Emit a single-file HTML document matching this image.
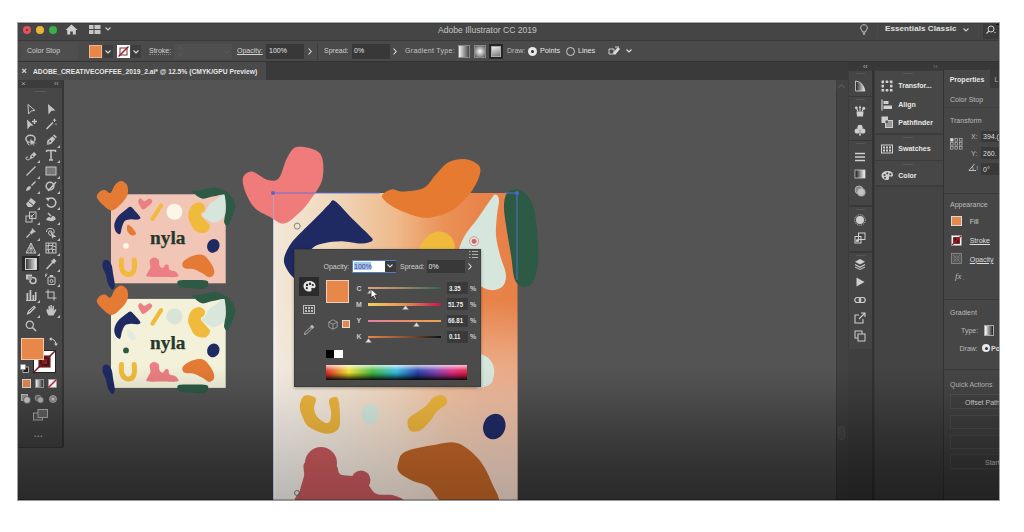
<!DOCTYPE html>
<html><head><meta charset="utf-8">
<style>
*{margin:0;padding:0;box-sizing:border-box}
html,body{width:1024px;height:532px;overflow:hidden;background:#fff}
body{position:relative;font-family:"Liberation Sans",sans-serif;color:#d4d4d4}
.a{position:absolute}
.t{position:absolute;white-space:nowrap;line-height:1;font-size:7px}
.b{font-weight:bold}
svg{position:absolute;overflow:visible}
#app{position:absolute;left:18px;top:22px;width:981px;height:478px;background:#3d3d3d;overflow:hidden}
</style></head><body>
<div id="app">
  <!-- title bar -->
  <div class="a" style="left:0;top:0;width:981px;height:18px;background:#454545"></div>
  <div class="a" style="left:0;top:17.5px;width:981px;height:1.5px;background:#3a3a3a"></div>
  <!-- control bar -->
  <div class="a" style="left:0;top:19px;width:981px;height:21px;background:#4a4a4a"></div>
  <div class="a" style="left:0;top:39px;width:981px;height:1px;background:#333"></div>
  <!-- tab bar -->
  <div class="a" style="left:0;top:40px;width:981px;height:18px;background:#3a3a3a"></div>
  <div class="a" style="left:0;top:40px;width:248px;height:18px;background:#4a4a4a"></div>
  <!-- toolbar -->
  <div class="a" style="left:0;top:58px;width:45px;height:367px;background:#474747"></div>
  <div class="a" style="left:0;top:425px;width:45px;height:53px;background:#545454"></div>
  <!-- canvas -->
  <div class="a" style="left:45px;top:58px;width:773px;height:420px;background:#545454"></div>
  <!-- scrollbar -->
  <div class="a" style="left:818px;top:58px;width:12px;height:420px;background:#3f3f3f"></div>
  <!-- icon strip -->
  <div class="a" style="left:830px;top:58px;width:24px;height:420px;background:#444"></div>
  <!-- panels column -->
  <div class="a" style="left:854px;top:58px;width:71px;height:420px;background:#434343"></div>
  <!-- properties -->
  <div class="a" style="left:925px;top:58px;width:56px;height:420px;background:#454545"></div>
</div>
<!--ART-->
<svg style="left:0;top:0" width="1024" height="532" viewBox="0 0 1024 532">
<defs><clipPath id="cv"><rect x="63" y="80" width="773" height="420"/></clipPath>
<linearGradient id="abh" x1="273" y1="0" x2="517" y2="0" gradientUnits="userSpaceOnUse"><stop offset="0" stop-color="#f2e8d8"/><stop offset="0.25" stop-color="#f0d8bc"/><stop offset="0.5" stop-color="#efba8c"/><stop offset="0.7" stop-color="#ea9256"/><stop offset="0.85" stop-color="#e8844a"/><stop offset="1" stop-color="#e88048"/></linearGradient>
<linearGradient id="abv" x1="0" y1="193" x2="0" y2="500" gradientUnits="userSpaceOnUse"><stop offset="0" stop-color="#f0ece8" stop-opacity="0"/><stop offset="0.35" stop-color="#f0ece8" stop-opacity="0"/><stop offset="0.51" stop-color="#f0ece8" stop-opacity="0.3"/><stop offset="0.67" stop-color="#eeecea" stop-opacity="0.52"/><stop offset="0.9" stop-color="#eceae9" stop-opacity="0.72"/><stop offset="1" stop-color="#eceae9" stop-opacity="0.78"/></linearGradient>
</defs>
<g clip-path="url(#cv)">
<g transform="translate(0,0)">
<rect x="111" y="194.3" width="114.7" height="89" fill="#f2c6b6"/>
<path d="M192.2 191.0 C193.0 190.3 196.8 190.8 200.3 190.2 C203.9 189.6 209.8 187.6 213.5 187.5 C217.2 187.4 220.7 188.8 222.6 189.8 C224.5 190.8 225.9 192.6 225.2 193.5 C224.5 194.4 221.0 194.6 218.6 195.2 C216.2 195.8 213.0 196.4 210.5 197.0 C208.0 197.6 205.4 198.8 203.4 198.8 C201.4 198.8 199.7 197.6 198.3 196.8 C196.9 196.0 196.2 195.2 195.2 194.2 C194.2 193.2 191.3 191.7 192.2 191.0Z" fill="#2c5a45" />
<path d="M224.7 191.1 C225.8 190.2 230.0 194.8 231.8 197.2 C233.6 199.6 235.1 202.3 235.3 205.4 C235.5 208.5 234.1 212.1 232.8 215.5 C231.5 218.9 229.1 224.5 227.7 225.7 C226.3 226.9 224.7 224.1 224.2 222.6 C223.7 221.1 224.5 219.9 224.7 216.5 C224.9 213.1 225.2 206.5 225.2 202.3 C225.2 198.1 223.6 191.9 224.7 191.1Z" fill="#2c5a45" />
<path d="M221.6 195.2 C223.0 194.8 224.4 193.7 225.0 197.0 C225.6 200.3 226.8 210.7 225.0 215.0 C223.2 219.3 217.4 221.8 214.5 222.6 C211.6 223.4 209.5 220.8 207.4 219.6 C205.3 218.4 202.1 216.9 201.8 215.5 C201.5 214.1 204.1 213.3 205.4 211.4 C206.7 209.5 207.6 206.3 209.4 204.3 C211.2 202.3 214.5 200.8 216.5 199.3 C218.5 197.8 220.2 195.6 221.6 195.2Z" fill="#d6e6dc" />
<path d="M198.3 202.3 C200.5 202.1 203.4 204.1 204.4 205.4 C205.4 206.8 205.0 208.9 204.4 210.4 C203.8 211.9 200.5 212.6 200.8 214.5 C201.1 216.4 204.9 219.6 206.4 221.6 C207.9 223.6 210.2 224.8 210.0 226.7 C209.8 228.6 207.9 232.1 205.4 232.8 C202.9 233.5 197.7 232.4 195.2 230.7 C192.7 229.0 191.4 225.1 190.2 222.6 C189.0 220.1 187.9 218.2 188.1 215.5 C188.3 212.8 189.5 208.6 191.2 206.4 C192.9 204.2 196.1 202.5 198.3 202.3Z" fill="#f0bb3c" />
<circle cx="174.5" cy="211.8" r="8" fill="#fbf6e6"/>
<path d="M140.5 198.3 C141.5 198.3 143.0 201.1 144.5 201.2 C146.0 201.2 148.2 198.5 149.5 198.6 C150.8 198.7 152.4 200.3 152.3 201.5 C152.2 202.7 150.6 204.2 149.0 205.5 C147.4 206.8 144.6 209.6 143.0 209.5 C141.4 209.4 140.3 206.4 139.5 205.0 C138.7 203.6 138.1 202.1 138.3 201.0 C138.5 199.9 139.5 198.3 140.5 198.3Z" fill="#ec7f83" />
<path d="M161 205.5 L152.5 219" stroke="#f0bb3c" stroke-width="4.2" stroke-linecap="round"/>
<path d="M100.0 191.4 C98.6 192.6 96.3 194.7 96.8 197.0 C97.3 199.3 100.5 202.8 103.0 205.0 C105.5 207.2 108.7 210.7 111.7 210.5 C114.7 210.3 118.4 206.6 121.0 204.0 C123.6 201.4 126.5 197.9 127.5 194.7 C128.5 191.5 128.1 187.3 127.0 185.0 C125.9 182.7 123.0 180.9 121.0 180.9 C119.0 180.9 116.8 183.0 115.0 185.0 C113.2 187.0 112.1 192.2 110.4 193.0 C108.7 193.8 106.7 190.3 105.0 190.0 C103.3 189.7 101.4 190.2 100.0 191.4Z" fill="#e57a35" />
<path d="M130.5 206.8 C132.0 207.1 133.3 209.2 135.0 211.0 C136.7 212.8 140.2 216.4 140.5 217.8 C140.8 219.2 138.6 219.4 137.0 219.6 C135.4 219.8 133.0 219.0 131.0 219.2 C129.0 219.4 126.5 219.5 125.0 220.8 C123.5 222.1 122.8 224.8 122.0 227.0 C121.2 229.2 121.1 233.5 120.0 234.2 C118.9 234.9 116.4 232.7 115.5 231.0 C114.6 229.3 114.0 226.4 114.4 224.0 C114.8 221.6 116.1 218.9 118.0 216.5 C119.9 214.1 123.9 211.1 126.0 209.5 C128.1 207.9 129.0 206.6 130.5 206.8Z" fill="#1f2a63" />
<path d="M127.5 225.0 C128.2 224.3 130.6 226.1 132.0 227.5 C133.4 228.9 136.0 232.2 136.0 233.5 C136.0 234.8 133.4 235.8 132.0 235.5 C130.6 235.2 128.2 233.2 127.5 231.5 C126.8 229.8 126.8 225.7 127.5 225.0Z" fill="#e57a35" />
<circle cx="126" cy="245.8" r="2.9" fill="#fbf6e6"/>
<ellipse cx="213.3" cy="245.8" rx="6.1" ry="7" transform="rotate(25 213.3 245.8)" fill="#1f2a63"/>
<text x="150" y="244.4" font-family="Liberation Serif" font-weight="bold" font-size="19" fill="#26382c" stroke="#26382c" stroke-width="0.25" textLength="35.5" lengthAdjust="spacingAndGlyphs">nyla</text>
<path d="M121.5 260 Q120 273 128 274.5 Q136 275 134.2 260" stroke="#f0bb3c" stroke-width="5" fill="none" stroke-linecap="round"/>
<path d="M103.7 260.7 C104.6 259.7 106.5 259.6 107.8 260.3 C109.1 261.0 110.6 262.4 111.5 264.8 C112.4 267.2 112.7 271.2 113.2 274.6 C113.8 278.0 114.9 282.8 114.8 285.3 C114.7 287.8 113.5 289.5 112.4 289.4 C111.3 289.3 109.4 287.0 108.3 284.5 C107.2 282.0 106.8 277.6 105.8 274.6 C104.8 271.6 102.8 268.7 102.5 266.4 C102.2 264.1 102.8 261.7 103.7 260.7Z" fill="#1f2a63" />
<path d="M148.0 272.1 C148.6 270.5 150.2 269.1 150.5 267.2 C150.8 265.3 149.1 262.3 149.7 260.7 C150.2 259.1 152.3 257.5 153.8 257.4 C155.3 257.2 157.8 258.4 158.7 259.8 C159.6 261.2 158.8 264.2 159.5 265.6 C160.2 267.0 161.8 268.1 162.8 268.0 C163.8 267.9 164.4 265.3 165.3 264.8 C166.2 264.3 167.8 264.4 168.5 265.2 C169.2 266.0 168.3 268.7 169.4 269.7 C170.5 270.7 173.7 270.5 175.1 271.3 C176.5 272.1 177.7 273.7 178.0 274.6 C178.3 275.5 179.5 276.5 176.8 276.9 C174.1 277.3 166.9 277.1 162.0 277.0 C157.1 276.9 149.5 277.4 147.2 276.6 C144.9 275.8 147.4 273.7 148.0 272.1Z" fill="#ec7f83" />
<path d="M183.0 262.0 C184.3 260.0 189.0 257.2 192.0 256.0 C195.0 254.8 198.5 254.2 201.0 254.5 C203.5 254.8 205.0 255.9 207.0 258.0 C209.0 260.1 211.8 264.3 213.0 267.0 C214.2 269.7 214.7 272.3 214.0 274.0 C213.3 275.7 211.0 277.5 209.0 277.3 C207.0 277.1 204.7 274.4 202.0 273.0 C199.3 271.6 196.0 269.8 193.0 269.0 C190.0 268.2 185.7 269.2 184.0 268.0 C182.3 266.8 181.7 264.0 183.0 262.0Z" fill="#e57a35" />
<path d="M178.0 281.0 C179.7 279.8 185.3 280.1 190.0 280.0 C194.7 279.9 203.0 279.8 206.0 280.5 C209.0 281.2 208.3 282.6 208.0 284.0 C207.7 285.4 207.0 288.1 204.0 288.8 C201.0 289.5 194.0 288.3 190.0 288.0 C186.0 287.7 182.0 288.2 180.0 287.0 C178.0 285.8 176.3 282.2 178.0 281.0Z" fill="#2c5a45" />
</g>
<g transform="translate(0,104.6)">
<rect x="111" y="194.3" width="114.7" height="89" fill="#f3f1da"/>
<path d="M192.2 191.0 C193.0 190.3 196.8 190.8 200.3 190.2 C203.9 189.6 209.8 187.6 213.5 187.5 C217.2 187.4 220.7 188.8 222.6 189.8 C224.5 190.8 225.9 192.6 225.2 193.5 C224.5 194.4 221.0 194.6 218.6 195.2 C216.2 195.8 213.0 196.4 210.5 197.0 C208.0 197.6 205.4 198.8 203.4 198.8 C201.4 198.8 199.7 197.6 198.3 196.8 C196.9 196.0 196.2 195.2 195.2 194.2 C194.2 193.2 191.3 191.7 192.2 191.0Z" fill="#2c5a45" />
<path d="M224.7 191.1 C225.8 190.2 230.0 194.8 231.8 197.2 C233.6 199.6 235.1 202.3 235.3 205.4 C235.5 208.5 234.1 212.1 232.8 215.5 C231.5 218.9 229.1 224.5 227.7 225.7 C226.3 226.9 224.7 224.1 224.2 222.6 C223.7 221.1 224.5 219.9 224.7 216.5 C224.9 213.1 225.2 206.5 225.2 202.3 C225.2 198.1 223.6 191.9 224.7 191.1Z" fill="#2c5a45" />
<path d="M221.6 195.2 C223.0 194.8 224.4 193.7 225.0 197.0 C225.6 200.3 226.8 210.7 225.0 215.0 C223.2 219.3 217.4 221.8 214.5 222.6 C211.6 223.4 209.5 220.8 207.4 219.6 C205.3 218.4 202.1 216.9 201.8 215.5 C201.5 214.1 204.1 213.3 205.4 211.4 C206.7 209.5 207.6 206.3 209.4 204.3 C211.2 202.3 214.5 200.8 216.5 199.3 C218.5 197.8 220.2 195.6 221.6 195.2Z" fill="#d9e6dc" />
<path d="M198.3 202.3 C200.5 202.1 203.4 204.1 204.4 205.4 C205.4 206.8 205.0 208.9 204.4 210.4 C203.8 211.9 200.5 212.6 200.8 214.5 C201.1 216.4 204.9 219.6 206.4 221.6 C207.9 223.6 210.2 224.8 210.0 226.7 C209.8 228.6 207.9 232.1 205.4 232.8 C202.9 233.5 197.7 232.4 195.2 230.7 C192.7 229.0 191.4 225.1 190.2 222.6 C189.0 220.1 187.9 218.2 188.1 215.5 C188.3 212.8 189.5 208.6 191.2 206.4 C192.9 204.2 196.1 202.5 198.3 202.3Z" fill="#f0bb3c" />
<circle cx="174.5" cy="211.8" r="8" fill="#d8e4d6"/>
<path d="M140.5 198.3 C141.5 198.3 143.0 201.1 144.5 201.2 C146.0 201.2 148.2 198.5 149.5 198.6 C150.8 198.7 152.4 200.3 152.3 201.5 C152.2 202.7 150.6 204.2 149.0 205.5 C147.4 206.8 144.6 209.6 143.0 209.5 C141.4 209.4 140.3 206.4 139.5 205.0 C138.7 203.6 138.1 202.1 138.3 201.0 C138.5 199.9 139.5 198.3 140.5 198.3Z" fill="#ec7f83" />
<path d="M161 205.5 L152.5 219" stroke="#f0bb3c" stroke-width="4.2" stroke-linecap="round"/>
<path d="M100.0 191.4 C98.6 192.6 96.3 194.7 96.8 197.0 C97.3 199.3 100.5 202.8 103.0 205.0 C105.5 207.2 108.7 210.7 111.7 210.5 C114.7 210.3 118.4 206.6 121.0 204.0 C123.6 201.4 126.5 197.9 127.5 194.7 C128.5 191.5 128.1 187.3 127.0 185.0 C125.9 182.7 123.0 180.9 121.0 180.9 C119.0 180.9 116.8 183.0 115.0 185.0 C113.2 187.0 112.1 192.2 110.4 193.0 C108.7 193.8 106.7 190.3 105.0 190.0 C103.3 189.7 101.4 190.2 100.0 191.4Z" fill="#e57a35" />
<path d="M130.5 206.8 C132.0 207.1 133.3 209.2 135.0 211.0 C136.7 212.8 140.2 216.4 140.5 217.8 C140.8 219.2 138.6 219.4 137.0 219.6 C135.4 219.8 133.0 219.0 131.0 219.2 C129.0 219.4 126.5 219.5 125.0 220.8 C123.5 222.1 122.8 224.8 122.0 227.0 C121.2 229.2 121.1 233.5 120.0 234.2 C118.9 234.9 116.4 232.7 115.5 231.0 C114.6 229.3 114.0 226.4 114.4 224.0 C114.8 221.6 116.1 218.9 118.0 216.5 C119.9 214.1 123.9 211.1 126.0 209.5 C128.1 207.9 129.0 206.6 130.5 206.8Z" fill="#1f2a63" />
<path d="M127.5 225.0 C128.2 224.3 130.6 226.1 132.0 227.5 C133.4 228.9 136.0 232.2 136.0 233.5 C136.0 234.8 133.4 235.8 132.0 235.5 C130.6 235.2 128.2 233.2 127.5 231.5 C126.8 229.8 126.8 225.7 127.5 225.0Z" fill="#e2ebdf" />
<circle cx="126" cy="245.8" r="2.9" fill="#2c5a45"/>
<ellipse cx="213.3" cy="245.8" rx="6.1" ry="7" transform="rotate(25 213.3 245.8)" fill="#1f2a63"/>
<text x="150" y="244.4" font-family="Liberation Serif" font-weight="bold" font-size="19" fill="#26382c" stroke="#26382c" stroke-width="0.25" textLength="35.5" lengthAdjust="spacingAndGlyphs">nyla</text>
<path d="M121.5 260 Q120 273 128 274.5 Q136 275 134.2 260" stroke="#f0bb3c" stroke-width="5" fill="none" stroke-linecap="round"/>
<path d="M103.7 260.7 C104.6 259.7 106.5 259.6 107.8 260.3 C109.1 261.0 110.6 262.4 111.5 264.8 C112.4 267.2 112.7 271.2 113.2 274.6 C113.8 278.0 114.9 282.8 114.8 285.3 C114.7 287.8 113.5 289.5 112.4 289.4 C111.3 289.3 109.4 287.0 108.3 284.5 C107.2 282.0 106.8 277.6 105.8 274.6 C104.8 271.6 102.8 268.7 102.5 266.4 C102.2 264.1 102.8 261.7 103.7 260.7Z" fill="#1f2a63" />
<path d="M148.0 272.1 C148.6 270.5 150.2 269.1 150.5 267.2 C150.8 265.3 149.1 262.3 149.7 260.7 C150.2 259.1 152.3 257.5 153.8 257.4 C155.3 257.2 157.8 258.4 158.7 259.8 C159.6 261.2 158.8 264.2 159.5 265.6 C160.2 267.0 161.8 268.1 162.8 268.0 C163.8 267.9 164.4 265.3 165.3 264.8 C166.2 264.3 167.8 264.4 168.5 265.2 C169.2 266.0 168.3 268.7 169.4 269.7 C170.5 270.7 173.7 270.5 175.1 271.3 C176.5 272.1 177.7 273.7 178.0 274.6 C178.3 275.5 179.5 276.5 176.8 276.9 C174.1 277.3 166.9 277.1 162.0 277.0 C157.1 276.9 149.5 277.4 147.2 276.6 C144.9 275.8 147.4 273.7 148.0 272.1Z" fill="#ec7f83" />
<path d="M183.0 262.0 C184.3 260.0 189.0 257.2 192.0 256.0 C195.0 254.8 198.5 254.2 201.0 254.5 C203.5 254.8 205.0 255.9 207.0 258.0 C209.0 260.1 211.8 264.3 213.0 267.0 C214.2 269.7 214.7 272.3 214.0 274.0 C213.3 275.7 211.0 277.5 209.0 277.3 C207.0 277.1 204.7 274.4 202.0 273.0 C199.3 271.6 196.0 269.8 193.0 269.0 C190.0 268.2 185.7 269.2 184.0 268.0 C182.3 266.8 181.7 264.0 183.0 262.0Z" fill="#e57a35" />
<path d="M178.0 281.0 C179.7 279.8 185.3 280.1 190.0 280.0 C194.7 279.9 203.0 279.8 206.0 280.5 C209.0 281.2 208.3 282.6 208.0 284.0 C207.7 285.4 207.0 288.1 204.0 288.8 C201.0 289.5 194.0 288.3 190.0 288.0 C186.0 287.7 182.0 288.2 180.0 287.0 C178.0 285.8 176.3 282.2 178.0 281.0Z" fill="#2c5a45" />
</g>
<rect x="273" y="193" width="244.5" height="320" fill="url(#abh)"/>
<rect x="273" y="193" width="244.5" height="320" fill="url(#abv)"/>
<path d="M251.4 171.6 C247.2 171.8 242.4 175.3 242.6 181.0 C242.8 186.7 248.0 199.5 252.6 205.5 C257.2 211.5 264.8 214.0 270.0 217.0 C275.2 220.0 279.2 224.2 284.0 223.5 C288.8 222.8 294.5 217.1 299.0 213.0 C303.5 208.9 307.1 204.8 311.0 199.0 C314.9 193.2 321.0 186.0 322.5 178.4 C324.0 170.8 324.1 158.8 320.0 153.5 C315.9 148.2 303.2 146.1 297.7 146.8 C292.2 147.6 290.1 152.8 287.0 158.0 C283.9 163.2 282.2 174.3 279.0 178.0 C275.8 181.7 272.6 181.1 268.0 180.0 C263.4 178.9 255.6 171.4 251.4 171.6Z" fill="#ef7b7b" />
<path d="M335.2 201.2 C339.2 203.8 347.8 214.3 353.3 219.8 C358.8 225.3 364.8 230.6 368.0 234.0 C371.2 237.4 373.6 238.9 372.5 240.5 C371.4 242.1 366.3 243.4 361.2 243.5 C356.1 243.6 348.0 241.3 342.0 241.2 C336.0 241.1 329.8 241.9 325.1 242.9 C320.4 243.9 316.8 244.7 313.8 246.9 C310.8 249.1 309.3 251.8 307.0 256.0 C304.7 260.2 302.2 268.3 300.0 272.0 C297.8 275.7 296.7 279.7 294.0 278.0 C291.3 276.3 284.7 267.5 284.0 262.0 C283.3 256.5 286.9 250.2 290.0 245.0 C293.1 239.8 297.6 236.1 302.5 231.0 C307.4 225.9 315.1 218.6 319.5 214.2 C323.9 209.8 326.4 206.7 329.0 204.5 C331.6 202.3 331.1 198.6 335.2 201.2Z" fill="#1f2a63" />
<path d="M382.0 196.5 C381.8 193.7 387.8 190.3 391.2 189.5 C394.6 188.7 397.0 191.8 402.4 191.6 C407.8 191.3 418.0 190.9 423.6 188.0 C429.2 185.1 432.1 178.3 436.3 174.0 C440.5 169.7 444.1 164.5 449.0 162.0 C453.9 159.5 460.8 158.5 465.9 159.2 C470.9 159.9 477.2 162.8 479.3 166.0 C481.4 169.2 480.4 173.3 478.6 178.2 C476.8 183.0 473.2 189.7 468.7 195.1 C464.2 200.5 458.4 206.8 451.8 210.6 C445.2 214.4 435.8 217.0 429.2 217.7 C422.6 218.4 418.4 216.8 412.3 214.9 C406.2 213.0 397.7 209.5 392.6 206.4 C387.6 203.3 382.2 199.3 382.0 196.5Z" fill="#e57a30" />
<path d="M420.0 250.0 C418.0 246.3 424.7 239.1 428.0 236.0 C431.3 232.9 436.0 231.3 440.0 231.6 C444.0 231.9 449.7 234.6 452.0 238.0 C454.3 241.4 456.0 248.7 454.0 252.0 C452.0 255.3 445.7 258.3 440.0 258.0 C434.3 257.7 422.0 253.7 420.0 250.0Z" fill="#f0bb3c" />
<path d="M495.2 194.5 C496.9 194.2 498.7 196.6 499.0 200.0 C499.3 203.4 497.5 209.2 497.0 215.0 C496.5 220.8 495.5 228.3 496.0 235.0 C496.5 241.7 498.3 248.3 500.0 255.0 C501.7 261.7 505.7 269.7 506.0 275.0 C506.3 280.3 504.7 284.5 502.0 287.0 C499.3 289.5 494.0 290.5 490.0 290.0 C486.0 289.5 482.0 287.3 478.0 284.0 C474.0 280.7 469.3 274.8 466.0 270.0 C462.7 265.2 458.7 260.5 458.4 255.0 C458.1 249.5 460.7 243.2 464.0 237.0 C467.3 230.8 473.8 223.8 478.0 218.0 C482.2 212.2 486.1 205.9 489.0 202.0 C491.9 198.1 493.5 194.8 495.2 194.5Z" fill="#d6e6dc" />
<path d="M476.0 356.0 C477.8 351.2 484.0 355.0 487.0 357.0 C490.0 359.0 493.2 363.8 494.0 368.0 C494.8 372.2 493.7 378.8 492.0 382.0 C490.3 385.2 486.7 386.3 484.0 387.0 C481.3 387.7 477.3 391.2 476.0 386.0 C474.7 380.8 474.2 360.8 476.0 356.0Z" fill="#d6e6dc" />
<path d="M508.0 192.0 C510.7 189.5 516.0 188.2 520.0 190.0 C524.0 191.8 529.2 196.3 532.0 203.0 C534.8 209.7 536.0 220.2 537.0 230.0 C538.0 239.8 538.7 253.3 538.0 262.0 C537.3 270.7 535.3 277.8 533.0 282.0 C530.7 286.2 527.0 287.3 524.0 287.0 C521.0 286.7 517.2 285.3 515.0 280.0 C512.8 274.7 512.5 264.2 511.0 255.0 C509.5 245.8 507.2 233.3 506.0 225.0 C504.8 216.7 503.7 210.5 504.0 205.0 C504.3 199.5 505.3 194.5 508.0 192.0Z" fill="#2c5a45" />
<path d="M273 193 L380 193 M505 193 L517 193 L517 280" stroke="#5b72d8" stroke-width="1" fill="none" opacity="0.9"/>
<rect x="273" y="280" width="3" height="220" fill="#fff" opacity="0.3"/>
<path d="M273.5 193 L273.5 500" stroke="#a8b0e0" stroke-width="1" fill="none" opacity="0.6"/>
<circle cx="273" cy="193" r="2" fill="#6a5ad0"/><circle cx="517" cy="193" r="2" fill="#4a6ad0"/>
<circle cx="297.2" cy="226.1" r="3" fill="none" stroke="#7a8a7a" stroke-width="1"/>
<circle cx="474.1" cy="241.3" r="4.5" fill="#f3e8e0" stroke="#c08080" stroke-width="0.8"/><circle cx="474.1" cy="241.3" r="2.5" fill="#c86a6a"/>
<path d="M303.0 396.9 C301.3 398.8 299.7 403.1 299.7 406.6 C299.7 410.1 301.4 414.6 303.0 418.0 C304.6 421.4 305.5 424.6 309.5 427.2 C313.5 429.8 321.9 433.5 326.8 433.7 C331.7 433.9 336.5 432.1 338.7 428.3 C340.9 424.5 339.9 415.9 339.8 411.0 C339.7 406.1 338.9 401.4 338.0 399.0 C337.1 396.6 335.9 396.7 334.4 396.9 C332.9 397.1 329.6 397.7 329.0 400.2 C328.4 402.7 330.9 408.6 331.1 412.0 C331.3 415.4 330.9 418.9 330.0 420.7 C329.1 422.5 327.9 423.6 325.7 422.9 C323.5 422.2 318.9 418.9 317.0 416.4 C315.1 413.9 314.2 410.9 314.0 408.0 C313.8 405.1 316.7 401.1 316.0 399.0 C315.3 396.9 312.2 395.9 310.0 395.5 C307.8 395.1 304.7 395.0 303.0 396.9Z" fill="#e9b23c" />
<ellipse cx="370.1" cy="414.2" rx="8.5" ry="10.3" fill="#cfe4d8"/>
<path d="M408.0 419.6 C409.3 416.5 414.6 414.3 417.7 412.0 C420.8 409.7 423.7 408.1 426.4 405.6 C429.1 403.1 431.1 398.6 434.0 397.0 C436.9 395.4 441.6 394.7 443.7 395.8 C445.8 396.9 448.0 400.9 446.9 403.4 C445.8 405.9 440.1 407.9 437.2 411.0 C434.3 414.1 432.5 418.6 429.6 421.8 C426.7 425.1 423.1 429.1 419.9 430.5 C416.6 431.9 412.1 432.3 410.1 430.5 C408.1 428.7 406.7 422.7 408.0 419.6Z" fill="#e9b23c" />
<ellipse cx="494.3" cy="426.5" rx="11" ry="13" transform="rotate(20 494.3 426.5)" fill="#1f2a63"/>
<g fill="#c2575b"><circle cx="321" cy="463" r="16"/><circle cx="361" cy="480" r="9.5"/></g>
<path d="M306.0 462.0 C311.0 460.0 328.3 462.0 334.0 464.0 C339.7 466.0 337.0 472.0 340.0 474.0 C343.0 476.0 347.8 475.3 352.0 476.0 C356.2 476.7 362.0 476.2 365.0 478.0 C368.0 479.8 368.0 484.3 370.0 487.0 C372.0 489.7 373.0 492.6 377.0 494.0 C381.0 495.4 390.0 494.1 394.0 495.4 C398.0 496.7 408.3 499.9 401.0 502.0 C393.7 504.1 367.2 507.7 350.0 508.0 C332.8 508.3 306.3 507.0 298.0 504.0 C289.7 501.0 299.0 494.7 300.0 490.0 C301.0 485.3 303.0 480.7 304.0 476.0 C305.0 471.3 301.0 464.0 306.0 462.0Z" fill="#c2575b" />
<path d="M398.2 462.9 C399.1 459.6 399.3 455.0 404.7 452.1 C410.1 449.2 422.0 447.1 430.7 445.6 C439.4 444.1 448.9 440.6 456.9 442.9 C464.9 445.2 472.9 452.5 478.8 459.3 C484.7 466.1 489.1 476.3 492.3 483.9 C495.5 491.5 501.7 499.0 498.0 505.0 C494.3 511.0 479.4 520.5 470.0 520.0 C460.6 519.5 448.4 507.6 441.5 502.0 C434.6 496.4 433.6 490.3 428.5 486.7 C423.4 483.1 416.1 482.6 411.2 480.2 C406.3 477.8 401.2 474.9 399.0 472.0 C396.8 469.1 397.2 466.2 398.2 462.9Z" fill="#bb6226" />
<circle cx="297" cy="493" r="2.5" fill="none" stroke="#666" stroke-width="0.9"/>
</g>
</svg>
<!--/ART-->
<!-- ===== TITLE BAR CONTENT (page coords) ===== -->
<div id="chrome">
  <div class="a" style="left:23px;top:26px;width:8px;height:8px;border-radius:50%;background:#e0555a"></div>
  <div class="a" style="left:26px;top:29px;width:2px;height:2px;border-radius:50%;background:#8a1a1a"></div>
  <div class="a" style="left:36px;top:26px;width:8px;height:8px;border-radius:50%;background:#e8b43a"></div>
  <div class="a" style="left:49px;top:26px;width:8px;height:8px;border-radius:50%;background:#3bb04a"></div>
  <svg style="left:65px;top:24px" width="13" height="11" viewBox="0 0 13 11"><path d="M6.5 0.5 L12.5 6 L10.8 6 L10.8 10.5 L7.8 10.5 L7.8 7.5 L5.2 7.5 L5.2 10.5 L2.2 10.5 L2.2 6 L0.5 6 Z" fill="#cfcfcf"/></svg>
  <svg style="left:89px;top:25px" width="12" height="9" viewBox="0 0 12 9"><rect x="0" y="0" width="4.5" height="4" fill="#c8c8c8"/><rect x="0" y="5" width="4.5" height="4" fill="#c8c8c8"/><rect x="5.5" y="0" width="6" height="4" fill="#c8c8c8"/><rect x="5.5" y="5" width="6" height="4" fill="#c8c8c8"/></svg>
  <svg style="left:105px;top:27px" width="6" height="4" viewBox="0 0 6 4"><path d="M0.5 0.5 L3 3 L5.5 0.5" stroke="#ccc" stroke-width="1.1" fill="none"/></svg>
  <div class="t" style="left:438px;top:26px;font-size:8.6px;color:#c4c4c4">Adobe Illustrator CC 2019</div>
  <svg style="left:860px;top:24px" width="8" height="11" viewBox="0 0 8 11"><path d="M4 0.7 C1.8 0.7 0.7 2.3 0.7 3.9 C0.7 5.6 2.3 6.5 2.5 8 L5.5 8 C5.7 6.5 7.3 5.6 7.3 3.9 C7.3 2.3 6.2 0.7 4 0.7 Z M2.8 9.2 L5.2 9.2 M3.2 10.3 L4.8 10.3" stroke="#cfcfcf" stroke-width="0.9" fill="none"/></svg>
  <div class="a" style="left:877px;top:23px;width:1px;height:16px;background:#4a4a4a"></div>
  <div class="t b" style="left:885px;top:25px;font-size:8.1px;color:#e0e0e0;letter-spacing:0.05px">Essentials Classic</div>
  <svg style="left:963px;top:28px" width="6" height="4" viewBox="0 0 6 4"><path d="M0.5 0.5 L3 3 L5.5 0.5" stroke="#ccc" stroke-width="1.1" fill="none"/></svg>
  <div class="a" style="left:978px;top:23px;width:1px;height:16px;background:#4a4a4a"></div>
  <div class="a" style="left:983px;top:23px;width:16px;height:16px;background:#3a3a3a"></div>
  <svg style="left:985px;top:25px" width="12" height="10" viewBox="0 0 12 10"><circle cx="6" cy="4" r="3" stroke="#cfcfcf" stroke-width="1" fill="none"/><path d="M3.8 6.2 L1.5 8.5" stroke="#cfcfcf" stroke-width="1.2"/><path d="M9 7 L11 7 L10 8.2 Z" fill="#cfcfcf"/></svg>
  <div class="a" style="left:996px;top:22px;width:3px;height:3px;background:#111"></div>
</div>

<!-- ===== CONTROL BAR ===== -->
<div id="ctrl">
  <div class="a" style="left:21px;top:42px;width:57px;height:18px;background:#4e4e4e"></div>
  <div class="t" style="left:27px;top:47px;color:#cfcfcf">Color Stop</div>
  <div class="a" style="left:89px;top:45px;width:13px;height:13px;background:#e8874a;border:1px solid #f0b58a"></div>
  <div class="a" style="left:103px;top:45px;width:10px;height:13px;background:#3e3e3e"></div>
  <svg style="left:105px;top:50px" width="6" height="4" viewBox="0 0 6 4"><path d="M0.5 0.5 L3 3 L5.5 0.5" stroke="#ddd" stroke-width="1.1" fill="none"/></svg>
  <div class="a" style="left:117px;top:45px;width:13px;height:13px;background:#fff"></div>
  <svg style="left:117px;top:45px" width="13" height="13" viewBox="0 0 13 13"><rect x="3" y="3" width="7" height="7" fill="none" stroke="#7a2a2a" stroke-width="1"/><path d="M1.5 11.5 L11.5 1.5" stroke="#9b1b30" stroke-width="1.4"/></svg>
  <div class="a" style="left:131px;top:45px;width:10px;height:13px;background:#3e3e3e"></div>
  <svg style="left:133px;top:50px" width="6" height="4" viewBox="0 0 6 4"><path d="M0.5 0.5 L3 3 L5.5 0.5" stroke="#ddd" stroke-width="1.1" fill="none"/></svg>
  <div class="t" style="left:149px;top:47px;color:#d4d4d4;border-bottom:1px dotted #888;padding-bottom:0px">Stroke:</div>
  <div class="a" style="left:174px;top:44px;width:58px;height:15px;background:#4f4f4f"></div>
  <svg style="left:178px;top:46px" width="5" height="11" viewBox="0 0 5 11"><path d="M0.5 3.5 L2.5 1 L4.5 3.5 M0.5 7.5 L2.5 10 L4.5 7.5" stroke="#5c5c5c" stroke-width="1" fill="none"/></svg>
  <svg style="left:224px;top:50px" width="6" height="4" viewBox="0 0 6 4"><path d="M0.5 0.5 L3 3 L5.5 0.5" stroke="#5c5c5c" stroke-width="1" fill="none"/></svg>
  <div class="t" style="left:237px;top:47px;color:#d4d4d4;text-decoration:underline">Opacity:</div>
  <div class="a" style="left:266px;top:44px;width:38px;height:15px;background:#383838"></div>
  <div class="t" style="left:269px;top:47px;color:#e8e8e8">100%</div>
  <svg style="left:308px;top:48px" width="4" height="7" viewBox="0 0 4 7"><path d="M0.5 0.5 L3.2 3.5 L0.5 6.5" stroke="#ddd" stroke-width="1.1" fill="none"/></svg>
  <div class="a" style="left:317px;top:43px;width:1px;height:17px;background:#3c3c3c"></div>
  <div class="t" style="left:324px;top:47px;color:#cfcfcf">Spread:</div>
  <div class="a" style="left:352px;top:44px;width:38px;height:15px;background:#383838"></div>
  <div class="t" style="left:354px;top:47px;color:#e8e8e8">0%</div>
  <svg style="left:393px;top:48px" width="4" height="7" viewBox="0 0 4 7"><path d="M0.5 0.5 L3.2 3.5 L0.5 6.5" stroke="#ddd" stroke-width="1.1" fill="none"/></svg>
  <div class="t" style="left:405px;top:47px;color:#c4c4c4;letter-spacing:0.3px">Gradient Type:</div>
  <div class="a" style="left:458px;top:45px;width:12px;height:13px;background:linear-gradient(90deg,#f4f4f4,#444);border:1px solid #888"></div>
  <div class="a" style="left:474px;top:45px;width:12px;height:13px;background:radial-gradient(circle,#fafafa 0,#aaa 50%,#555 100%);border:1px solid #888"></div>
  <div class="a" style="left:489px;top:44px;width:14px;height:15px;background:#262626"></div>
  <div class="a" style="left:491px;top:46px;width:10px;height:11px;background:linear-gradient(160deg,#eee,#777);border:1px solid #aaa"></div>
  <div class="t" style="left:507px;top:47px;color:#bdbdbd">Draw:</div>
  <div class="a" style="left:528px;top:47px;width:9px;height:9px;border-radius:50%;background:#e8e8e8"></div>
  <div class="a" style="left:531px;top:50px;width:3px;height:3px;border-radius:50%;background:#333"></div>
  <div class="t" style="left:540px;top:47px;color:#e8e8e8;font-size:7.2px">Points</div>
  <div class="a" style="left:566px;top:47px;width:9px;height:9px;border-radius:50%;border:1px solid #cfcfcf"></div>
  <div class="t" style="left:578px;top:47px;color:#e8e8e8;font-size:7.2px">Lines</div>
  <svg style="left:608px;top:45px" width="13" height="12" viewBox="0 0 13 12"><path d="M1 4 L6 4 L6 9 L1 9 Z" fill="none" stroke="#ccc" stroke-width="1"/><path d="M5 8 L10 2 L12 4 L7 10 Z" fill="#ddd"/><path d="M7 2 L11 2" stroke="#ccc"/></svg>
  <svg style="left:626px;top:49px" width="6" height="4" viewBox="0 0 6 4"><path d="M0.5 0.5 L3 3 L5.5 0.5" stroke="#ddd" stroke-width="1.1" fill="none"/></svg>
  <!-- doc tab -->
  <div class="t b" style="left:21.5px;top:66.5px;font-size:9px;color:#e0e0e0">&#215;</div>
  <div class="t b" style="left:33px;top:68px;font-size:7px;color:#e6e6e6;transform:scaleX(0.96);transform-origin:0 0">ADOBE_CREATIVECOFFEE_2019_2.ai* @ 12.5% (CMYK/GPU Preview)</div>
</div>
<!-- ===== TOOLBAR ===== -->
<div id="tools">
<div class="a" style="left:18px;top:80px;width:45px;height:8px;background:#3c3c3c"></div>
<div class="t" style="left:21px;top:79.5px;font-size:8px;color:#aaa">&#215;</div>
<div class="t" style="left:54px;top:80px;font-size:7px;color:#aaa">&#8249;&#8249;</div>
<div class="a" style="left:35px;top:91px;width:11px;height:1px;background:#5a5a5a"></div>
<div class="a" style="left:62px;top:80px;width:1.5px;height:367px;background:#363636"></div>
<div class="a" style="left:18px;top:447px;width:45px;height:1px;background:#383838"></div>
<div class="a" style="left:22px;top:256px;width:17px;height:15px;background:#2a2a2a"></div>
<svg style="left:25.0px;top:257.8px" width="12" height="12" viewBox="0 0 12 12"><rect x="0.5" y="0.5" width="11" height="11" fill="url(#gt)" stroke="#ccc" stroke-width="1"/><defs><linearGradient id="gt"><stop offset="0" stop-color="#333"/><stop offset="1" stop-color="#eee"/></linearGradient></defs></svg>
<svg style="left:25.0px;top:103.0px" width="12" height="12" viewBox="0 0 12 12"><path d="M3 1.5 L10 7.5 L6.3 7.8 L3.5 11 Z" stroke="#c4c4c4" stroke-width="1" fill="none"/></svg>
<svg style="left:44.5px;top:103.0px" width="12" height="12" viewBox="0 0 12 12"><path d="M3 1 L10.5 7.5 L6.5 7.8 L3.5 11.5 Z" fill="#c4c4c4"/></svg>
<svg style="left:25.0px;top:118.4px" width="12" height="12" viewBox="0 0 12 12"><path d="M2 1.5 L8.5 7.5 L5.3 7.8 L2.5 11.5 Z" fill="#c4c4c4"/><path d="M9.5 1 L9.5 6 M7 3.5 L12 3.5" stroke="#c4c4c4" stroke-width="1.4"/></svg>
<svg style="left:44.5px;top:118.4px" width="12" height="12" viewBox="0 0 12 12"><path d="M1.5 11 L8 4.5" stroke="#c4c4c4" stroke-width="1.6"/><path d="M9.5 0.5 L9.5 4 M7.8 2.2 L11.2 2.2 M11 5.5 L11 7" stroke="#c4c4c4" stroke-width="0.9"/></svg>
<svg style="left:25.0px;top:133.8px" width="12" height="12" viewBox="0 0 12 12"><ellipse cx="5.5" cy="4.8" rx="4.6" ry="3.6" stroke="#c4c4c4" stroke-width="1.5" fill="none"/><path d="M5 4.5 L11.5 9.5 L8.3 9.8 L10 12 L8.8 12 L7.2 10.2 L5.3 11.8 Z" fill="#c4c4c4" stroke="#444" stroke-width="0.5"/><path d="M2.5 7.5 Q1.8 10.5 4.5 11" stroke="#c4c4c4" stroke-width="1" fill="none"/></svg>
<svg style="left:44.5px;top:133.8px" width="12" height="12" viewBox="0 0 12 12"><path d="M1.5 11 L2.5 6.5 L7.5 2.2 L10.3 5 L6 10 Z" fill="#c4c4c4"/><path d="M8 1.5 L9.3 0.5 L11.8 3 L10.8 4.3 Z" fill="#c4c4c4"/><circle cx="5.2" cy="7.2" r="1" fill="#444"/><path d="M1.5 11 L5 7.5" stroke="#444" stroke-width="0.6"/></svg>
<svg style="left:25.0px;top:149.3px" width="12" height="12" viewBox="0 0 12 12"><path d="M4.5 10.5 L5.5 6.5 L9 3 L11.5 5.5 L8 9 Z" fill="#c4c4c4"/><circle cx="7.5" cy="7.3" r="0.9" fill="#444"/><path d="M4.5 10.5 Q1.5 12 1 9.5 Q0.8 7.5 3 8" stroke="#c4c4c4" stroke-width="1" fill="none"/></svg>
<svg style="left:44.5px;top:149.3px" width="12" height="12" viewBox="0 0 12 12"><path d="M1.5 1.5 L10.5 1.5 L10.5 3 M1.5 1.5 L1.5 3 M6 1.5 L6 11 M4 11 L8 11" stroke="#c4c4c4" stroke-width="1.5" fill="none"/></svg>
<svg style="left:25.0px;top:164.8px" width="12" height="12" viewBox="0 0 12 12"><path d="M1.5 10.5 L10.5 1.5" stroke="#c4c4c4" stroke-width="1.2"/></svg>
<svg style="left:44.5px;top:164.8px" width="12" height="12" viewBox="0 0 12 12"><rect x="1" y="2" width="10" height="8" fill="#777" stroke="#c4c4c4" stroke-width="1"/></svg>
<svg style="left:25.0px;top:180.2px" width="12" height="12" viewBox="0 0 12 12"><path d="M6.5 5.5 L10.5 1.5" stroke="#c4c4c4" stroke-width="1.5"/><path d="M1 11 Q1.5 6.5 5 6 L6 7 Q5.5 10.5 1 11 Z" fill="#c4c4c4"/></svg>
<svg style="left:44.5px;top:180.2px" width="12" height="12" viewBox="0 0 12 12"><circle cx="5" cy="6" r="3.8" stroke="#c4c4c4" stroke-width="1.5" fill="none"/><path d="M3 11 L11 2" stroke="#c4c4c4" stroke-width="1.5"/></svg>
<svg style="left:25.0px;top:195.7px" width="12" height="12" viewBox="0 0 12 12"><path d="M1 8 L6 2 L11 6 L7 11 L3 11 Z" fill="#c4c4c4"/><path d="M3.5 5.5 L8.5 9.5" stroke="#444"/></svg>
<svg style="left:44.5px;top:195.7px" width="12" height="12" viewBox="0 0 12 12"><path d="M3 3.5 A4.5 4.5 0 1 1 2 8" stroke="#c4c4c4" stroke-width="1.5" fill="none"/><path d="M0.5 2 L4.5 1.5 L3.5 5.5 Z" fill="#c4c4c4"/></svg>
<svg style="left:25.0px;top:211.1px" width="12" height="12" viewBox="0 0 12 12"><rect x="1" y="5" width="6" height="6" stroke="#c4c4c4" stroke-width="1" fill="none"/><rect x="4.5" y="1" width="6.5" height="6.5" stroke="#c4c4c4" stroke-width="1" fill="none"/><path d="M6 6 L9.5 2.5" stroke="#c4c4c4"/></svg>
<svg style="left:44.5px;top:211.1px" width="12" height="12" viewBox="0 0 12 12"><path d="M1 9 Q3 4 6 7 Q8 2 11 8 Q8 11 5 10 Z" fill="#c4c4c4"/><path d="M3 2 L6 5" stroke="#c4c4c4" stroke-width="1.4"/></svg>
<svg style="left:25.0px;top:226.5px" width="12" height="12" viewBox="0 0 12 12"><path d="M7 1 L11 5 L8.5 5.5 L6.5 7.5 L4.5 5.5 L6.5 3.5 Z" fill="#c4c4c4"/><path d="M5 7 L1.5 10.5" stroke="#c4c4c4" stroke-width="1.3"/></svg>
<svg style="left:44.5px;top:226.5px" width="12" height="12" viewBox="0 0 12 12"><path d="M1.5 5 Q1.5 1 6 1.5 Q10 2 9 6 L6 6 L6.5 4 Q3.5 3 3.5 6 Q3.5 8 6 8.5" stroke="#c4c4c4" stroke-width="1" fill="none" stroke-width="1.3"/><path d="M5.5 5 L11.5 10 L8.5 10 L7.5 12 Z" fill="#c4c4c4"/></svg>
<svg style="left:25.0px;top:242.0px" width="12" height="12" viewBox="0 0 12 12"><path d="M1 11 L6 1 L11 11 Z M3.5 6 L8.5 6 M6 1 L6 11" stroke="#c4c4c4" stroke-width="1" fill="none"/><path d="M2 11 L6 6 L10 11" stroke="#c4c4c4" stroke-width="0.8" fill="none"/></svg>
<svg style="left:44.5px;top:242.0px" width="12" height="12" viewBox="0 0 12 12"><rect x="1" y="1" width="10" height="10" stroke="#c4c4c4" stroke-width="1" fill="none"/><path d="M1 4 Q6 2 11 5 M1 8 Q6 6 11 8 M4 1 Q2 6 4 11 M8 1 Q6 6 8 11" stroke="#c4c4c4" stroke-width="1" fill="none" stroke-width="0.8"/></svg>
<svg style="left:44.5px;top:257.8px" width="12" height="12" viewBox="0 0 12 12"><path d="M1.5 11 L8.5 3.5" stroke="#c4c4c4" stroke-width="1.6"/><path d="M7 2.5 L9 0.5 L11.5 3 L9.5 5 Z" fill="#c4c4c4"/><path d="M6.5 2.5 L9.5 5.5" stroke="#c4c4c4" stroke-width="1.2"/></svg>
<svg style="left:25.0px;top:273.3px" width="12" height="12" viewBox="0 0 12 12"><rect x="1" y="1.5" width="6" height="5" fill="#c4c4c4"/><circle cx="8" cy="7.5" r="3" stroke="#c4c4c4" stroke-width="1.6" fill="none"/><rect x="3" y="3" width="4" height="4" fill="#999"/></svg>
<svg style="left:44.5px;top:273.3px" width="12" height="12" viewBox="0 0 12 12"><rect x="3" y="4" width="7" height="7.5" rx="1" stroke="#c4c4c4" stroke-width="1" fill="none"/><rect x="5" y="2" width="3" height="2" fill="#c4c4c4"/><circle cx="6.5" cy="8" r="1.5" stroke="#c4c4c4" stroke-width="1" fill="none"/><path d="M0.5 1 L2.5 1 M0.5 1 L0.5 4 M0.5 2.5 L2 2.5" stroke="#c4c4c4" stroke-width="0.8"/></svg>
<svg style="left:25.0px;top:288.5px" width="12" height="12" viewBox="0 0 12 12"><path d="M1 11.5 L11 11.5" stroke="#c4c4c4"/><rect x="1.5" y="4" width="1.8" height="7" fill="#c4c4c4"/><rect x="4.5" y="1" width="1.8" height="10" fill="#c4c4c4"/><rect x="7.5" y="6" width="1.8" height="5" fill="#c4c4c4"/><rect x="10" y="3" width="1.5" height="8" fill="#c4c4c4"/></svg>
<svg style="left:44.5px;top:288.5px" width="12" height="12" viewBox="0 0 12 12"><path d="M3 0.5 L3 9 L11.5 9 M0.5 3 L9 3 L9 11.5" stroke="#c4c4c4" stroke-width="1.1" fill="none"/></svg>
<svg style="left:25.0px;top:303.6px" width="12" height="12" viewBox="0 0 12 12"><path d="M1.5 11 L3 7 L9 1.5 L11 3.5 L5 9.5 Z" fill="#c4c4c4"/><path d="M4 8 L8.5 3.5" stroke="#444" stroke-width="0.8"/></svg>
<svg style="left:44.5px;top:303.6px" width="12" height="12" viewBox="0 0 12 12"><path d="M3.5 11.5 Q1 8 1.5 5.5 L3 5 L3.5 7 L3.5 2 L4.8 1.8 L5.2 6 L5.5 1 L6.8 1 L7 6 L7.8 1.8 L9 2 L8.8 7 L10.3 5 L11.5 6 Q9 10 8.5 11.5 Z" fill="#c4c4c4"/></svg>
<svg style="left:25.0px;top:319.5px" width="12" height="12" viewBox="0 0 12 12"><circle cx="4.8" cy="4.8" r="3.6" stroke="#c4c4c4" stroke-width="1.2" fill="none"/><path d="M7.5 7.5 L11 11" stroke="#c4c4c4" stroke-width="1.6"/></svg>
<svg style="left:37px;top:160.3px" width="3" height="3" viewBox="0 0 3 3"><path d="M3 0 L3 3 L0 3 Z" fill="#bbb"/></svg>
<svg style="left:56.5px;top:160.3px" width="3" height="3" viewBox="0 0 3 3"><path d="M3 0 L3 3 L0 3 Z" fill="#bbb"/></svg>
<svg style="left:37px;top:175.8px" width="3" height="3" viewBox="0 0 3 3"><path d="M3 0 L3 3 L0 3 Z" fill="#bbb"/></svg>
<svg style="left:56.5px;top:175.8px" width="3" height="3" viewBox="0 0 3 3"><path d="M3 0 L3 3 L0 3 Z" fill="#bbb"/></svg>
<svg style="left:37px;top:191.2px" width="3" height="3" viewBox="0 0 3 3"><path d="M3 0 L3 3 L0 3 Z" fill="#bbb"/></svg>
<svg style="left:56.5px;top:191.2px" width="3" height="3" viewBox="0 0 3 3"><path d="M3 0 L3 3 L0 3 Z" fill="#bbb"/></svg>
<svg style="left:37px;top:206.7px" width="3" height="3" viewBox="0 0 3 3"><path d="M3 0 L3 3 L0 3 Z" fill="#bbb"/></svg>
<svg style="left:56.5px;top:206.7px" width="3" height="3" viewBox="0 0 3 3"><path d="M3 0 L3 3 L0 3 Z" fill="#bbb"/></svg>
<svg style="left:37px;top:222.1px" width="3" height="3" viewBox="0 0 3 3"><path d="M3 0 L3 3 L0 3 Z" fill="#bbb"/></svg>
<svg style="left:56.5px;top:222.1px" width="3" height="3" viewBox="0 0 3 3"><path d="M3 0 L3 3 L0 3 Z" fill="#bbb"/></svg>
<svg style="left:37px;top:237.5px" width="3" height="3" viewBox="0 0 3 3"><path d="M3 0 L3 3 L0 3 Z" fill="#bbb"/></svg>
<svg style="left:56.5px;top:237.5px" width="3" height="3" viewBox="0 0 3 3"><path d="M3 0 L3 3 L0 3 Z" fill="#bbb"/></svg>
<svg style="left:37px;top:253px" width="3" height="3" viewBox="0 0 3 3"><path d="M3 0 L3 3 L0 3 Z" fill="#bbb"/></svg>
<svg style="left:56.5px;top:253px" width="3" height="3" viewBox="0 0 3 3"><path d="M3 0 L3 3 L0 3 Z" fill="#bbb"/></svg>
<svg style="left:56.5px;top:268.8px" width="3" height="3" viewBox="0 0 3 3"><path d="M3 0 L3 3 L0 3 Z" fill="#bbb"/></svg>
<svg style="left:56.5px;top:284.3px" width="3" height="3" viewBox="0 0 3 3"><path d="M3 0 L3 3 L0 3 Z" fill="#bbb"/></svg>
<svg style="left:37px;top:299.5px" width="3" height="3" viewBox="0 0 3 3"><path d="M3 0 L3 3 L0 3 Z" fill="#bbb"/></svg>
<svg style="left:37px;top:314.6px" width="3" height="3" viewBox="0 0 3 3"><path d="M3 0 L3 3 L0 3 Z" fill="#bbb"/></svg>
<svg style="left:56.5px;top:314.6px" width="3" height="3" viewBox="0 0 3 3"><path d="M3 0 L3 3 L0 3 Z" fill="#bbb"/></svg>
<svg style="left:56.5px;top:144.8px" width="3" height="3" viewBox="0 0 3 3"><path d="M3 0 L3 3 L0 3 Z" fill="#bbb"/></svg>
<div class="a" style="left:33px;top:350px;width:23px;height:23px;background:#fff;border:1px solid #222"></div>
<svg style="left:33px;top:350px" width="23" height="23" viewBox="0 0 23 23"><rect x="6" y="6" width="11" height="11" fill="#4a1414" stroke="#7a2424" stroke-width="1.2"/><rect x="9" y="9" width="5" height="5" fill="#8a2a2a"/><path d="M1 22 L22 1" stroke="#7a1a24" stroke-width="1.6"/></svg>
<div class="a" style="left:21px;top:338px;width:23px;height:22px;background:#e8874a;border:1px solid #f4c9a8"></div>
<svg style="left:49px;top:337px" width="9" height="9" viewBox="0 0 9 9"><path d="M1 2 Q6 1.5 7 7" stroke="#ccc" stroke-width="1" fill="none"/><path d="M0 2 L2.5 0 L2.5 4 Z M5 6.5 L9 6.5 L7 9 Z" fill="#ccc"/></svg>
<svg style="left:20px;top:364px" width="9" height="9" viewBox="0 0 9 9"><rect x="3" y="3" width="5.5" height="5.5" fill="#222" stroke="#ccc" stroke-width="0.8"/><rect x="0.5" y="0.5" width="5" height="5" fill="#fff" stroke="#888" stroke-width="0.6"/></svg>
<div class="a" style="left:22px;top:379px;width:9px;height:9px;background:#e8874a;border:1px solid #d8d8d8"></div>
<div class="a" style="left:35px;top:379px;width:9px;height:9px;background:linear-gradient(90deg,#fff,#333);border:1px solid #999"></div>
<svg style="left:48px;top:379px" width="9" height="9" viewBox="0 0 9 9"><rect x="0.5" y="0.5" width="8" height="8" fill="#fff" stroke="#aaa" stroke-width="0.6"/><path d="M0.5 8.5 L8.5 0.5" stroke="#c01830" stroke-width="1.5"/></svg>
<svg style="left:21px;top:394px" width="11" height="10" viewBox="0 0 11 10"><rect x="0.5" y="0.5" width="6" height="6" fill="#999" stroke="#ddd" stroke-width="0.7"/><circle cx="6" cy="6" r="3.5" fill="#ccc" stroke="#555" stroke-width="0.7"/></svg>
<svg style="left:34px;top:394px" width="11" height="10" viewBox="0 0 11 10"><circle cx="4" cy="4" r="3" fill="#777" stroke="#aaa" stroke-width="0.7"/><circle cx="6.5" cy="6" r="3" fill="#bbb" stroke="#666" stroke-width="0.7"/></svg>
<svg style="left:48px;top:394px" width="10" height="10" viewBox="0 0 10 10"><circle cx="5" cy="5" r="3.5" fill="#888" stroke="#bbb" stroke-width="0.8"/><circle cx="5" cy="5" r="1.5" fill="#ccc"/></svg>
<svg style="left:33px;top:409px" width="15" height="12" viewBox="0 0 15 12"><rect x="0.5" y="4" width="9" height="7" fill="#555" stroke="#bbb" stroke-width="0.9"/><rect x="5" y="0.5" width="9.5" height="8" fill="#666" stroke="#bbb" stroke-width="0.9"/></svg>
<div class="t b" style="left:34px;top:430px;font-size:9px;color:#bbb;letter-spacing:0.5px">...</div>
</div>

<!-- ===== COLOR PANEL ===== -->
<div id="cpanel">
  <div class="a" style="left:294px;top:249px;width:187px;height:138px;background:#4b4b4b;box-shadow:0 1px 3px rgba(0,0,0,0.35);border:1px solid #3e3e3e"></div>
  <svg style="left:469px;top:251px" width="9" height="7" viewBox="0 0 9 7"><path d="M0 0.5 L1.5 0.5 M3 0.5 L9 0.5 M0 3.5 L1.5 3.5 M3 3.5 L9 3.5 M0 6.5 L1.5 6.5 M3 6.5 L9 6.5" stroke="#bbb" stroke-width="0.9"/></svg>
  <div class="t" style="left:323.5px;top:263px;color:#d0d0d0">Opacity:</div>
  <div class="a" style="left:351.5px;top:259.5px;width:44.5px;height:13px;border:1px solid #4f7ec8;background:#fff"></div>
  <div class="a" style="left:384.5px;top:260.5px;width:11px;height:11px;background:#3a3a3a"></div>
  <svg style="left:387px;top:264px" width="6" height="4" viewBox="0 0 6 4"><path d="M0.5 0.5 L3 3 L5.5 0.5" stroke="#ddd" stroke-width="1.1" fill="none"/></svg>
  <div class="a" style="left:354px;top:262px;width:17px;height:8px;background:#a9c4ee"></div>
  <div class="t" style="left:354px;top:263px;color:#2a4a8a">100%</div>
  <div class="t" style="left:400px;top:263px;color:#d0d0d0">Spread:</div>
  <div class="a" style="left:426.5px;top:259.5px;width:38px;height:13px;background:#383838"></div>
  <div class="t" style="left:428.5px;top:263px;color:#eee">0%</div>
  <svg style="left:468px;top:263px" width="4" height="7" viewBox="0 0 4 7"><path d="M0.5 0.5 L3.2 3.5 L0.5 6.5" stroke="#ddd" stroke-width="1.1" fill="none"/></svg>
  <!-- left icons -->
  <div class="a" style="left:299px;top:276.5px;width:19.5px;height:19px;background:#2b2b2b"></div>
  <svg style="left:302.5px;top:280px" width="13" height="12" viewBox="0 0 13 12"><path d="M6.5 1 C10.5 1 12.5 3.5 12.5 6 C12.5 8 11 8.5 9.8 8 C8.5 7.5 8 8.5 8.5 9.5 C9 11 7.5 11.5 6 11.5 C3 11.5 0.5 9 0.5 6 C0.5 3 3 1 6.5 1 Z" fill="#e8e8e8"/><circle cx="4" cy="5" r="1.2" fill="#2b2b2b"/><circle cx="7" cy="3.8" r="1.2" fill="#2b2b2b"/><circle cx="9.8" cy="5" r="1.1" fill="#2b2b2b"/><circle cx="3.8" cy="8.2" r="1.1" fill="#2b2b2b"/></svg>
  <svg style="left:302.5px;top:305px" width="12" height="9" viewBox="0 0 12 9"><rect x="0.5" y="0.5" width="11" height="8" fill="none" stroke="#bbb" stroke-width="1"/><rect x="2" y="2" width="2" height="2" fill="#bbb"/><rect x="5" y="2" width="2" height="2" fill="#bbb"/><rect x="8" y="2" width="2" height="2" fill="#bbb"/><rect x="2" y="5" width="2" height="2" fill="#bbb"/><rect x="5" y="5" width="2" height="2" fill="#bbb"/><rect x="8" y="5" width="2" height="2" fill="#bbb"/></svg>
  <svg style="left:302.5px;top:323.5px" width="12" height="12" viewBox="0 0 12 12"><path d="M1.5 10.5 L2 8.5 L7 3.5 L8.5 5 L3.5 10 Z" fill="none" stroke="#bbb" stroke-width="0.9"/><path d="M7 2.5 L9 0.7 L11.3 3 L9.5 5 Z" fill="#bbb"/></svg>
  <!-- swatches -->
  <div class="a" style="left:325.5px;top:280px;width:23px;height:22.5px;background:#e8874a;border:1px solid #f2d0b8"></div>
  <svg style="left:327.5px;top:318.5px" width="10" height="11" viewBox="0 0 10 11"><path d="M5 0.8 L9.2 3 L9.2 8 L5 10.2 L0.8 8 L0.8 3 Z M0.8 3 L5 5.3 L9.2 3 M5 5.3 L5 10.2" fill="none" stroke="#aaa" stroke-width="0.8"/></svg>
  <div class="a" style="left:341.5px;top:319.5px;width:8.5px;height:8.5px;background:#e8874a;border:1px solid #ddd"></div>
  <div class="a" style="left:325.5px;top:349.5px;width:17px;height:8.5px;background:#fff"></div>
  <div class="a" style="left:325.5px;top:349.5px;width:8.5px;height:8.5px;background:#000"></div>
  <!-- CMYK -->
  <div class="t" style="left:356.5px;top:284.5px;color:#c8c8c8;font-weight:bold">C</div>
  <div class="t" style="left:356px;top:300.5px;color:#c8c8c8;font-weight:bold">M</div>
  <div class="t" style="left:356.5px;top:317px;color:#c8c8c8;font-weight:bold">Y</div>
  <div class="t" style="left:356.5px;top:333px;color:#c8c8c8;font-weight:bold">K</div>
  <div class="a" style="left:367.5px;top:286.5px;width:73px;height:2.5px;background:linear-gradient(90deg,#dfa27e,#a88a6a 45%,#2f6a55)"></div>
  <div class="a" style="left:367.5px;top:303px;width:73px;height:2.5px;background:linear-gradient(90deg,#f2d35a,#e68f55 50%,#c8184a)"></div>
  <div class="a" style="left:367.5px;top:319.5px;width:73px;height:2.5px;background:linear-gradient(90deg,#e87ca6,#eb8e66 50%,#e8a64a)"></div>
  <div class="a" style="left:367.5px;top:335.5px;width:73px;height:2.5px;background:linear-gradient(90deg,#e8874a,#7a4a30 60%,#111)"></div>
  <svg style="left:366.5px;top:288.5px" width="7" height="5" viewBox="0 0 7 5"><path d="M3.5 0.5 L6.5 4.5 L0.5 4.5 Z" fill="#e0e0e0" stroke="#888" stroke-width="0.5"/></svg>
  <svg style="left:401.5px;top:305px" width="7" height="5" viewBox="0 0 7 5"><path d="M3.5 0.5 L6.5 4.5 L0.5 4.5 Z" fill="#e0e0e0" stroke="#888" stroke-width="0.5"/></svg>
  <svg style="left:412.5px;top:321.5px" width="7" height="5" viewBox="0 0 7 5"><path d="M3.5 0.5 L6.5 4.5 L0.5 4.5 Z" fill="#e0e0e0" stroke="#888" stroke-width="0.5"/></svg>
  <svg style="left:365px;top:337.5px" width="7" height="5" viewBox="0 0 7 5"><path d="M3.5 0.5 L6.5 4.5 L0.5 4.5 Z" fill="#e0e0e0" stroke="#888" stroke-width="0.5"/></svg>
  <!-- cursor -->
  <svg style="left:370px;top:288px" width="9" height="12" viewBox="0 0 9 12"><path d="M1 1 L1 10 L3.2 8 L5 11.5 L6.5 10.8 L4.8 7.3 L8 7.3 Z" fill="#fff" stroke="#222" stroke-width="0.8"/></svg>
  <div class="a" style="left:446.5px;top:282px;width:21px;height:12px;background:#3a3a3a"></div>
  <div class="a" style="left:446.5px;top:298px;width:21px;height:12px;background:#3a3a3a"></div>
  <div class="a" style="left:446.5px;top:314.5px;width:21px;height:12px;background:#3a3a3a"></div>
  <div class="a" style="left:446.5px;top:330.5px;width:21px;height:12px;background:#3a3a3a"></div>
  <div class="t" style="left:449px;top:284.5px;color:#eee;font-weight:bold;transform:scaleX(0.86);transform-origin:0 0">3.35</div>
  <div class="t" style="left:447.5px;top:300.5px;color:#eee;font-weight:bold;transform:scaleX(0.86);transform-origin:0 0">51.75</div>
  <div class="t" style="left:447.5px;top:317px;color:#eee;font-weight:bold;transform:scaleX(0.86);transform-origin:0 0">66.81</div>
  <div class="t" style="left:449px;top:333px;color:#eee;font-weight:bold;transform:scaleX(0.86);transform-origin:0 0">0.11</div>
  <div class="t" style="left:470px;top:284.5px;color:#cfcfcf;font-weight:bold">%</div>
  <div class="t" style="left:470px;top:300.5px;color:#cfcfcf;font-weight:bold">%</div>
  <div class="t" style="left:470px;top:317px;color:#cfcfcf;font-weight:bold">%</div>
  <div class="t" style="left:470px;top:333px;color:#cfcfcf;font-weight:bold">%</div>
  <!-- spectrum -->
  <div class="a" style="left:326px;top:364.5px;width:141px;height:15.5px;background:linear-gradient(90deg,#e02828,#f0e030 16%,#40b840 33%,#30b8e0 50%,#2840a8 65%,#8040b0 78%,#e02880 90%,#e02040)"></div>
  <div class="a" style="left:326px;top:364.5px;width:141px;height:15.5px;background:linear-gradient(180deg,rgba(255,255,255,0.75),rgba(255,255,255,0.1) 35%,rgba(0,0,0,0) 50%,rgba(0,0,0,0.3) 70%,rgba(0,0,0,0.92))"></div>
</div>

<!-- ===== RIGHT PANELS ===== -->
<div id="rp">
  <!-- header strip -->
  <div class="a" style="left:848px;top:62px;width:151px;height:8px;background:#383838"></div>
  <div class="t" style="left:863px;top:62.5px;font-size:7px;color:#bbb">&#8249;&#8249;</div>
  <div class="t" style="left:933px;top:62.5px;font-size:7px;color:#777">&#8250;&#8250;</div>
  <!-- scrollbar -->
  <div class="a" style="left:836px;top:80px;width:12px;height:420px;background:#424242"></div>
  <div class="a" style="left:836px;top:90px;width:1px;height:410px;background:#3a3a3a"></div>
  <svg style="left:838px;top:84px" width="7" height="4" viewBox="0 0 7 4"><path d="M0.5 3.5 L3.5 0.8 L6.5 3.5" stroke="#6a6a6a" stroke-width="1" fill="none"/></svg>
  <div class="a" style="left:838px;top:426px;width:7px;height:14px;border-radius:3px;background:#4a4a4a;border:1px solid #555"></div>
  <!-- icon strip -->
  <div class="a" style="left:848px;top:70px;width:24.5px;height:430px;background:#3b3b3b"></div>
  <div class="a" style="left:849px;top:71px;width:22.5px;height:278px;background:#454545"></div>
  <div class="a" style="left:849px;top:96px;width:22.5px;height:1px;background:#383838"></div>
  <div class="a" style="left:849px;top:139.5px;width:22.5px;height:1.5px;background:#383838"></div>
  <div class="a" style="left:849px;top:205px;width:22.5px;height:1.5px;background:#383838"></div>
  <div class="a" style="left:849px;top:251px;width:22.5px;height:1.5px;background:#383838"></div>
  <div class="a" style="left:856px;top:73px;width:9px;height:1px;background:#555"></div>
  <div class="a" style="left:856px;top:99px;width:9px;height:1px;background:#555"></div>
  <div class="a" style="left:856px;top:143px;width:9px;height:1px;background:#555"></div>
  <div class="a" style="left:856px;top:209px;width:9px;height:1px;background:#555"></div>
  <div class="a" style="left:856px;top:255px;width:9px;height:1px;background:#555"></div>
  <div class="a" style="left:848px;top:349px;width:25px;height:151px;background:#3f3f3f"></div>
  <div class="a" style="left:872px;top:70px;width:1.5px;height:430px;background:#333"></div>
<svg style="left:854.4px;top:79.7px" width="12" height="12" viewBox="0 0 12 12"><defs><linearGradient id="gq" x1="0" x2="1"><stop offset="0" stop-color="#222"/><stop offset="1" stop-color="#eee"/></linearGradient></defs><path d="M1.5 11 L1.5 1 Q9 1.5 11 11 Z" fill="url(#gq)" stroke="#ddd" stroke-width="0.8"/></svg>
<svg style="left:854.4px;top:105.3px" width="12" height="12" viewBox="0 0 12 12"><path d="M2.5 6.5 L9.5 6.5 L9 11.5 L3 11.5 Z" fill="#cfcfcf"/><path d="M4 6.5 L2.5 3 M6 6.5 L6 1.5 M8 6.5 L9.5 3.5" stroke="#cfcfcf" stroke-width="1.1"/><circle cx="2.3" cy="2.8" r="1.4" fill="#cfcfcf"/><path d="M5 3 L6 0.3 L7 3 Z" fill="#cfcfcf"/><circle cx="9.8" cy="3.2" r="1.5" fill="#cfcfcf"/></svg>
<svg style="left:854.4px;top:123.69999999999999px" width="12" height="12" viewBox="0 0 12 12"><circle cx="6" cy="3.3" r="2.6" fill="#cfcfcf"/><circle cx="3.2" cy="7" r="2.6" fill="#cfcfcf"/><circle cx="8.8" cy="7" r="2.6" fill="#cfcfcf"/><path d="M6 6 L5 11.5 L7 11.5 Z" fill="#cfcfcf"/></svg>
<svg style="left:854.4px;top:150.6px" width="12" height="12" viewBox="0 0 12 12"><path d="M1 2.5 L11 2.5 M1 6 L11 6 M1 9.5 L11 9.5" stroke="#cfcfcf" stroke-width="1.4"/></svg>
<svg style="left:854.4px;top:168.4px" width="12" height="12" viewBox="0 0 12 12"><defs><linearGradient id="gb" x1="0" x2="1"><stop offset="0" stop-color="#111"/><stop offset="1" stop-color="#fff"/></linearGradient></defs><rect x="1" y="2" width="10" height="8" fill="url(#gb)" stroke="#ccc" stroke-width="0.8"/></svg>
<svg style="left:854.4px;top:184.5px" width="12" height="12" viewBox="0 0 12 12"><circle cx="5" cy="5" r="4" fill="#888" stroke="#bbb" stroke-width="0.8"/><circle cx="7.3" cy="7.3" r="4" fill="#cfcfcf" fill-opacity="0.85" stroke="#999" stroke-width="0.6"/></svg>
<svg style="left:854.4px;top:214.0px" width="12" height="12" viewBox="0 0 12 12"><circle cx="6" cy="6" r="4" fill="#cfcfcf"/><circle cx="6" cy="6" r="5.3" fill="none" stroke="#cfcfcf" stroke-width="0.9" stroke-dasharray="1 1"/></svg>
<svg style="left:854.4px;top:232.2px" width="12" height="12" viewBox="0 0 12 12"><rect x="4.5" y="1" width="6.5" height="6.5" fill="none" stroke="#cfcfcf" stroke-width="1"/><rect x="1" y="4.5" width="6" height="6.5" fill="none" stroke="#cfcfcf" stroke-width="1"/><circle cx="3.5" cy="8.5" r="1.6" fill="#cfcfcf"/></svg>
<svg style="left:854.4px;top:258.0px" width="12" height="12" viewBox="0 0 12 12"><path d="M6 1 L11 3.8 L6 6.6 L1 3.8 Z" fill="#cfcfcf"/><path d="M1 6.5 L6 9.3 L11 6.5" stroke="#cfcfcf" stroke-width="1.2" fill="none"/><path d="M1 9 L6 11.5 L11 9" stroke="#cfcfcf" stroke-width="1" fill="none"/></svg>
<svg style="left:854.4px;top:275.5px" width="12" height="12" viewBox="0 0 12 12"><path d="M2.5 1.5 L10.5 6 L2.5 10.5 Z" fill="#cfcfcf"/></svg>
<svg style="left:854.4px;top:294.0px" width="12" height="12" viewBox="0 0 12 12"><rect x="0.8" y="3.5" width="6" height="5" rx="2.5" fill="none" stroke="#cfcfcf" stroke-width="1.2"/><rect x="5.2" y="3.5" width="6" height="5" rx="2.5" fill="none" stroke="#cfcfcf" stroke-width="1.2"/></svg>
<svg style="left:854.4px;top:312.0px" width="12" height="12" viewBox="0 0 12 12"><path d="M9 7 L9 11 L1 11 L1 3 L5 3" stroke="#cfcfcf" stroke-width="1.1" fill="none"/><path d="M5 7 L11 1 M7 1 L11 1 L11 5" stroke="#cfcfcf" stroke-width="1.1" fill="none"/></svg>
<svg style="left:854.4px;top:330.3px" width="12" height="12" viewBox="0 0 12 12"><rect x="1" y="1" width="7" height="7" fill="none" stroke="#cfcfcf" stroke-width="1"/><rect x="4" y="4" width="7" height="7" fill="#454545" stroke="#cfcfcf" stroke-width="1"/></svg>

  <div class="a" style="left:873.5px;top:70px;width:70px;height:430px;background:#3c3c3c"></div>
  <div class="a" style="left:874.5px;top:71px;width:68px;height:62px;background:#474747"></div>
  <div class="a" style="left:874.5px;top:134.5px;width:68px;height:25px;background:#474747"></div>
  <div class="a" style="left:874.5px;top:161px;width:68px;height:24px;background:#474747"></div>
  <div class="a" style="left:874.5px;top:186.5px;width:68px;height:313.5px;background:#444"></div>
  <div class="a" style="left:903px;top:73px;width:10px;height:1px;background:#5a5a5a"></div>
  <div class="a" style="left:903px;top:137px;width:10px;height:1px;background:#5a5a5a"></div>
  <div class="a" style="left:903px;top:163.5px;width:10px;height:1px;background:#5a5a5a"></div>
  <div class="t b" style="left:898.3px;top:82px;color:#e8e8e8;font-size:7px">Transfor...</div>
  <div class="t b" style="left:898.3px;top:101px;color:#e8e8e8;font-size:7px">Align</div>
  <div class="t b" style="left:898.3px;top:118.8px;color:#e8e8e8;font-size:7px">Pathfinder</div>
  <div class="t b" style="left:898.3px;top:145px;color:#e8e8e8;font-size:7px">Swatches</div>
  <div class="t b" style="left:898.3px;top:171.5px;color:#e8e8e8;font-size:7px">Color</div>
  <!-- properties -->
  <div class="a" style="left:943.5px;top:70px;width:56px;height:430px;background:#464646"></div>
  <div class="a" style="left:942.5px;top:70px;width:1.5px;height:430px;background:#333"></div>
  <div class="a" style="left:944px;top:69px;width:0;height:0"></div>
  
  <div class="a" style="left:944px;top:70px;width:46px;height:18px;background:#474747"></div>
  <div class="a" style="left:990px;top:70px;width:9px;height:18px;background:#3a3a3a"></div>
  <div class="t b" style="left:949.7px;top:75.5px;color:#e8e8e8;font-size:7px">Properties</div>
  <div class="t" style="left:994.5px;top:75.5px;color:#aaa;font-size:7px">L</div>
  <div class="t" style="left:950px;top:95.5px;color:#bbb">Color Stop</div>
  <div class="t" style="left:950px;top:116.5px;color:#bbb">Transform</div>
  <div class="a" style="left:944px;top:107px;width:55px;height:1px;background:#404040"></div>
  <div class="t" style="left:971px;top:133px;color:#bbb">X:</div>
  <div class="a" style="left:981px;top:130.5px;width:18px;height:11.5px;background:#393939"></div>
  <div class="t" style="left:983px;top:133px;color:#ddd">394.(</div>
  <div class="t" style="left:971px;top:149.5px;color:#bbb">Y:</div>
  <div class="a" style="left:981px;top:147px;width:18px;height:11.5px;background:#393939"></div>
  <div class="t" style="left:983px;top:149.5px;color:#ddd">260.</div>
  <div class="a" style="left:981px;top:163px;width:18px;height:11.5px;background:#393939"></div>
  <div class="t" style="left:983px;top:165.5px;color:#ddd">0&#176;</div>
  <svg style="left:968px;top:163px" width="10" height="8" viewBox="0 0 10 8"><path d="M1 7.5 L6.5 1 M1 7.5 L8 7.5" stroke="#ccc" stroke-width="0.9" fill="none"/><path d="M4.5 4 Q5.5 5.5 5 7.5" stroke="#ccc" stroke-width="0.7" fill="none"/><circle cx="9.3" cy="4" r="0.6" fill="#ccc"/><circle cx="9.3" cy="6" r="0.6" fill="#ccc"/></svg>
  <svg style="left:950px;top:138px" width="13" height="12" viewBox="0 0 13 12"><g fill="none" stroke="#bbb" stroke-width="0.7"><rect x="0.5" y="0.5" width="2.6" height="2.6" fill="#eee"/><rect x="5" y="0.5" width="2.6" height="2.6"/><rect x="9.5" y="0.5" width="2.6" height="2.6"/><rect x="0.5" y="4.5" width="2.6" height="2.6"/><rect x="5" y="4.5" width="2.6" height="2.6"/><rect x="9.5" y="4.5" width="2.6" height="2.6"/><rect x="0.5" y="8.5" width="2.6" height="2.6"/><rect x="5" y="8.5" width="2.6" height="2.6"/><rect x="9.5" y="8.5" width="2.6" height="2.6"/></g></svg>
  <div class="a" style="left:944px;top:193px;width:55px;height:1px;background:#3a3a3a"></div>
  <div class="t" style="left:950px;top:201px;color:#bbb">Appearance</div>
  <div class="a" style="left:950.5px;top:215.8px;width:11px;height:10.5px;background:#e8874a;border:1px solid #d8d8d8"></div>
  <div class="t" style="left:969.7px;top:217.5px;color:#ccc">Fill</div>
  <svg style="left:950.5px;top:234.7px" width="11" height="11" viewBox="0 0 11 11"><rect x="0.5" y="0.5" width="10" height="10" fill="#f4f4f4" stroke="#999" stroke-width="0.6"/><rect x="3" y="3" width="5" height="5" fill="#3a1818" stroke="#6a1a1a" stroke-width="1.8"/><path d="M1 10 L10 1" stroke="#c01830" stroke-width="1.2"/></svg>
  <div class="t" style="left:969.7px;top:236.5px;color:#ddd;text-decoration:underline">Stroke</div>
  <svg style="left:950.5px;top:253px" width="11" height="11" viewBox="0 0 11 11"><rect x="0.5" y="0.5" width="10" height="10" fill="#555" stroke="#999" stroke-width="0.7"/><path d="M2 2 L9 9 M9 2 L2 9" stroke="#777" stroke-width="0.8"/><circle cx="5.5" cy="5.5" r="2.5" fill="none" stroke="#777" stroke-width="0.7"/></svg>
  <div class="t" style="left:969.7px;top:255.5px;color:#ddd;text-decoration:underline">Opacity</div>
  <div class="t" style="left:955px;top:272px;color:#bbb;font-family:'Liberation Serif';font-style:italic;font-size:9px">fx</div>
  <div class="t" style="left:963px;top:275px;color:#bbb;font-size:6px">.</div>
  <div class="a" style="left:944px;top:299px;width:55px;height:1px;background:#3a3a3a"></div>
  <div class="t" style="left:950px;top:308.5px;color:#bbb">Gradient</div>
  <div class="t" style="left:961px;top:327px;color:#bbb">Type:</div>
  <div class="a" style="left:984px;top:325px;width:10px;height:11px;background:linear-gradient(90deg,#fff,#222);border:1px solid #aaa"></div>
  <div class="t" style="left:959.5px;top:344.5px;color:#bbb">Draw:</div>
  <div class="a" style="left:982px;top:344px;width:8px;height:8px;border-radius:50%;background:#e8e8e8"></div>
  <div class="a" style="left:984.5px;top:346.5px;width:3px;height:3px;border-radius:50%;background:#333"></div>
  <div class="t b" style="left:991px;top:344.5px;color:#ddd">Po</div>
  <div class="a" style="left:944px;top:369px;width:55px;height:1px;background:#3a3a3a"></div>
  <div class="t" style="left:950px;top:381px;color:#bbb">Quick Actions</div>
  <div class="a" style="left:950px;top:394px;width:50px;height:15px;border:1px solid #525252;background:#444"></div>
  <div class="t" style="left:965px;top:398.5px;color:#ddd">Offset Path</div>
  <div class="a" style="left:950px;top:414.5px;width:50px;height:14.5px;border:1px solid #525252;background:#444"></div>
  <div class="a" style="left:950px;top:434.5px;width:50px;height:14px;border:1px solid #525252;background:#444"></div>
  <div class="a" style="left:950px;top:454px;width:50px;height:15px;border:1px solid #525252;background:#444"></div>
  <div class="t" style="left:985px;top:458.5px;color:#ddd">Start</div>
<svg style="left:880.6px;top:79.7px" width="12" height="12" viewBox="0 0 12 12"><g fill="#cfcfcf"><rect x="0.5" y="0.5" width="2.5" height="2.5"/><rect x="9" y="0.5" width="2.5" height="2.5"/><rect x="0.5" y="9" width="2.5" height="2.5"/><rect x="9" y="9" width="2.5" height="2.5"/><rect x="4.8" y="0.5" width="2.4" height="2.5"/><rect x="4.8" y="9" width="2.4" height="2.5"/><rect x="0.5" y="4.8" width="2.5" height="2.4"/><rect x="9" y="4.8" width="2.5" height="2.4"/></g><rect x="1.7" y="1.7" width="8.6" height="8.6" fill="none" stroke="#cfcfcf" stroke-width="0.6" stroke-dasharray="1 1"/></svg>
<svg style="left:880.6px;top:98.5px" width="12" height="12" viewBox="0 0 12 12"><path d="M1 0.5 L1 11.5" stroke="#cfcfcf" stroke-width="1.2"/><rect x="2.5" y="2" width="5" height="3" fill="#cfcfcf"/><rect x="2.5" y="6.5" width="8.5" height="3.5" fill="#cfcfcf"/></svg>
<svg style="left:880.6px;top:116.3px" width="12" height="12" viewBox="0 0 12 12"><rect x="0.5" y="0.5" width="6.5" height="6.5" fill="#cfcfcf"/><rect x="4.5" y="4.5" width="7" height="7" fill="#999" stroke="#cfcfcf" stroke-width="1"/><rect x="4.5" y="4.5" width="2.5" height="2.5" fill="#555"/></svg>
<svg style="left:880.6px;top:142.5px" width="12" height="12" viewBox="0 0 12 12"><rect x="0.5" y="2" width="11" height="8" fill="none" stroke="#cfcfcf" stroke-width="1"/><g fill="#cfcfcf"><rect x="2" y="3.5" width="2" height="2"/><rect x="5" y="3.5" width="2" height="2"/><rect x="8" y="3.5" width="2" height="2"/><rect x="2" y="6.5" width="2" height="2"/><rect x="5" y="6.5" width="2" height="2"/><rect x="8" y="6.5" width="2" height="2"/></g></svg>
<svg style="left:880.6px;top:169.0px" width="12" height="12" viewBox="0 0 12 12"><path d="M6.5 2 C10.5 2 12 4 12 6 C12 7.5 10.5 8 9.5 7.5 C8.5 7 7.5 8 8 9 C8.5 10.5 7 11 5.5 11 C2.5 11 0.5 8.5 0.5 6.5 C0.5 4 3 2 6.5 2 Z" fill="#cfcfcf"/><circle cx="3.5" cy="6" r="1.1" fill="#474747"/><circle cx="6.3" cy="4.3" r="1.1" fill="#474747"/><circle cx="9.3" cy="5.3" r="1.1" fill="#474747"/><circle cx="4" cy="8.8" r="1" fill="#474747"/></svg>
</div>
<div class="a" style="left:999px;top:0;width:25px;height:532px;background:#fff"></div>
<div class="a" style="left:0;top:500px;width:1024px;height:32px;background:#fff"></div>
<div class="a" style="left:18px;top:300px;width:255px;height:200px;background:linear-gradient(180deg,rgba(0,0,0,0) 0%,rgba(0,0,0,0) 33%,rgba(0,0,0,0.08) 45%,rgba(0,0,0,0.26) 65%,rgba(0,0,0,0.42) 85%,rgba(0,0,0,0.5) 100%)"></div>
<div class="a" style="left:517.5px;top:300px;width:481.5px;height:200px;background:linear-gradient(180deg,rgba(0,0,0,0) 0%,rgba(0,0,0,0) 33%,rgba(0,0,0,0.08) 45%,rgba(0,0,0,0.26) 65%,rgba(0,0,0,0.42) 85%,rgba(0,0,0,0.5) 100%)"></div>
<div class="a" style="left:273px;top:300px;width:244.5px;height:200px;background:linear-gradient(180deg,rgba(0,0,0,0) 0%,rgba(0,0,0,0) 33%,rgba(0,0,0,0.03) 45%,rgba(0,0,0,0.1) 65%,rgba(0,0,0,0.17) 85%,rgba(0,0,0,0.22) 100%)"></div>
<div class="a" style="left:17px;top:22px;width:983px;height:1px;background:#a8a8a8"></div>
<div class="a" style="left:17px;top:500px;width:983px;height:1px;background:#9a9a9a"></div>
<div class="a" style="left:17px;top:22px;width:1px;height:479px;background:#a0a0a0"></div>
<div class="a" style="left:999px;top:22px;width:1px;height:479px;background:#a0a0a0"></div>
<div class="a" style="left:18px;top:23px;width:981px;height:1px;background:#3c3c3c"></div>
<div class="a" style="left:18px;top:499px;width:981px;height:1px;background:rgba(0,0,0,0.25)"></div>
</body></html>
